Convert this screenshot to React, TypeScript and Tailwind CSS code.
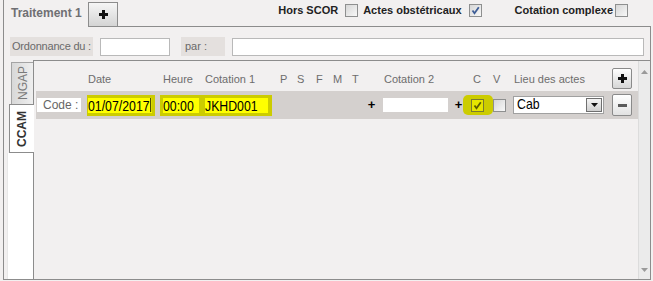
import React from 'react';

const PlusIcon: React.FC = () => (
  <svg width="9" height="9" viewBox="0 0 9 9">
    <rect x="3" y="0" width="3" height="9" fill="#111" />
    <rect x="0" y="3" width="9" height="3" fill="#111" />
  </svg>
);

const MinusIcon: React.FC = () => (
  <svg width="9" height="9" viewBox="0 0 9 9">
    <rect x="0" y="3" width="9" height="3" fill="#5a5a5a" />
  </svg>
);

const Check: React.FC<{ checked?: boolean; tone?: 'blue' | 'olive' }> = ({ checked, tone = 'blue' }) => (
  <div
    className={
      tone === 'olive'
        ? 'w-[13px] h-[13px] border border-[#7a7a30] bg-[#e6e600] flex items-center justify-center'
        : 'w-[13px] h-[13px] border border-[#8e8f8f] bg-linear-to-br from-[#d6d6d6] to-[#f8f8f8] flex items-center justify-center'
    }
  >
    {checked && (
      <svg width="11" height="11" viewBox="0 0 11 11">
        <path
          d="M2.5 5.5 L4.5 8.2 L8.8 2.2"
          fill="none"
          stroke={tone === 'olive' ? '#5c5c00' : '#3e5d96'}
          strokeWidth="1.8"
        />
      </svg>
    )}
  </div>
);

// narrow data text, like the app's condensed field font
const Narrow: React.FC<{ text: string; cursor?: boolean }> = ({ text, cursor }) => (
  <span className="inline-block whitespace-nowrap origin-left scale-x-[0.82] text-[15px] leading-[15px] text-black">
    {text}
    {cursor && <span className="inline-block align-top ml-[1px] w-[1.3px] h-[14px] bg-black" />}
  </span>
);

const Marked: React.FC<{ text: string; outer: string; inner: string; cursor?: boolean }> = ({ text, outer, inner, cursor }) => (
  <div className={`${outer} h-[21px] bg-[#cccc00] flex items-center`}>
    <div className={`${inner} h-[15px] bg-[#ffff00] flex items-center`}>
      <Narrow text={text} cursor={cursor} />
    </div>
  </div>
);

export default function App() {
  return (
    <div className="w-[653px] h-[281px] bg-[#f2f0f0] overflow-hidden font-['Liberation_Sans',Arial,sans-serif] text-[11px] text-[#333] pl-[3px] pr-[2px]">
      {/* tab strip */}
      <div className="flex h-[27px]">
        <div className="w-[85px] border-l border-[#8c8c8c] pl-[7px] pt-[6px] text-[12px] leading-[14px] font-bold text-[#6f6f73]">
          Traitement 1
        </div>
        <div className="w-[30px] mt-[2px] border border-[#8c8c8c] bg-linear-to-b from-[#f6f6f6] to-[#d4d4d4] flex items-center justify-center">
          <PlusIcon />
        </div>
        <div className="flex-1 border-b border-[#8c8c8c] flex items-start justify-end pr-[23px] pt-[4px]">
          <span className="font-bold text-[#222] leading-[13px]">Hors SCOR</span>
          <div className="ml-[7px]"><Check /></div>
          <span className="ml-[5px] font-bold text-[#222] leading-[13px]">Actes obstétricaux</span>
          <div className="ml-[7px]"><Check checked /></div>
          <span className="ml-[33px] font-bold text-[#222] leading-[13px]">Cotation complexe</span>
          <div className="ml-[2px]"><Check /></div>
        </div>
      </div>

      {/* body */}
      <div className="h-[253px] border-l border-r border-b border-[#8c8c8c] flex flex-col">
        <div className="flex items-center h-[19px] mt-[10px] pl-[6px] pr-[6px]">
          <div className="w-[83px] h-[19px] bg-[#e4e0de] flex items-center pl-[2px] whitespace-nowrap tracking-[-0.2px] text-[#6a6a6a]">Ordonnance du :</div>
          <div className="ml-[7px] w-[70px] h-[18px] bg-white border border-[#b9b9b9]" />
          <div className="ml-[11px] w-[44px] h-[19px] bg-[#e4e0de] flex items-center pl-[4px] text-[#6a6a6a]">par :</div>
          <div className="ml-[7px] flex-1 h-[18px] bg-white border border-[#b9b9b9]" />
        </div>

        <div className="mt-[4px] flex flex-1">
          {/* vertical tabs */}
          <div className="w-[29px] flex flex-col relative z-10">
            <div className="ml-[7px] mt-[2px] w-[22px] h-[42px] border-l border-t border-[#a4a4a4] bg-linear-to-r from-[#d8d8d8] to-[#efefef] flex items-center justify-center">
              <span className="[writing-mode:vertical-rl] rotate-180 text-[12px] text-[#7a7a7a]">NGAP</span>
            </div>
            <div className="ml-[5px] w-[25px] h-[49px] bg-white border-l border-t border-b border-[#8c8c8c] flex items-center justify-center">
              <span className="[writing-mode:vertical-rl] rotate-180 text-[12px] font-bold text-[#333]">CCAM</span>
            </div>
            <div className="ml-[3px] flex-1 bg-white border-l border-[#e8e8e8]" />
          </div>

          {/* content */}
          <div className="flex-1 flex border-l border-t border-[#8c8c8c]">
            <div className="flex-1 flex flex-col">
              <div className="flex h-[30px] items-start text-[#6d6d6d]">
                <span className="w-[54px]" />
                <span className="w-[75px] mt-[12px] leading-[13px]">Date</span>
                <span className="w-[42px] mt-[12px] leading-[13px]">Heure</span>
                <span className="w-[75px] mt-[12px] leading-[13px]">Cotation 1</span>
                <span className="w-[17px] mt-[12px] leading-[13px]">P</span>
                <span className="w-[19px] mt-[12px] leading-[13px]">S</span>
                <span className="w-[17px] mt-[12px] leading-[13px]">F</span>
                <span className="w-[19px] mt-[12px] leading-[13px]">M</span>
                <span className="w-[32px] mt-[12px] leading-[13px]">T</span>
                <span className="w-[89px] mt-[12px] leading-[13px]">Cotation 2</span>
                <span className="w-[20px] mt-[12px] leading-[13px]">C</span>
                <span className="w-[21px] mt-[12px] leading-[13px]">V</span>
                <span className="w-[98px] mt-[12px] leading-[13px]">Lieu des actes</span>
                <div className="mt-[7px] w-[20px] h-[21px] rounded-[2px] border border-[#8a8a8a] bg-linear-to-b from-[#ffffff] to-[#d6d6d6] flex items-center justify-center">
                  <PlusIcon />
                </div>
              </div>

              <div className="ml-[2px] h-[28px] bg-[#d4d0ce] flex items-center">
                <div className="ml-[1px] w-[44px] h-[14px] bg-white pl-[6px] text-[12px] leading-[14px] text-[#666]">Code :</div>
                <div className="ml-[6px]">
                  <Marked text="01/07/2017" outer="w-[68px] pl-[1px]" inner="w-[64px]" cursor />
                </div>
                <div className="ml-[5px]">
                  <Marked text="00:00" outer="w-[41px] pl-[3px]" inner="w-[36px]" />
                </div>
                <Marked text="JKHD001" outer="w-[71px] pl-[4px]" inner="w-[63px]" />
                <span className="ml-[95px] w-[9px] text-center text-[13px] font-bold text-black">+</span>
                <div className="ml-[7px] w-[65px] h-[14px] bg-white" />
                <span className="ml-[6px] w-[9px] text-center text-[13px] font-bold text-black">+</span>
                <div className="w-[30px] h-[20px] rounded-[5px] bg-[#cccc00] flex items-center pl-[8px]">
                  <Check checked tone="olive" />
                </div>
                <Check />
                <div className="ml-[7px] w-[91px] h-[18px] bg-white border border-[#a0a0a0] flex items-center">
                  <div className="pl-[3px] flex-1">
                    <Narrow text="Cab" />
                  </div>
                  <div className="mr-px w-[16px] h-[14px] border border-[#6f6f6f] bg-linear-to-b from-[#f4f4f4] to-[#cfcfcf] flex items-center justify-center">
                    <svg width="7" height="4" viewBox="0 0 7 4">
                      <path d="M0 0 H7 L3.5 4 Z" fill="#111" />
                    </svg>
                  </div>
                </div>
                <div className="ml-[8px] w-[20px] h-[22px] rounded-[2px] border border-[#8a8a8a] bg-linear-to-b from-[#ffffff] to-[#e2e2e2] flex items-center justify-center">
                  <MinusIcon />
                </div>
              </div>
            </div>

            {/* scrollbar */}
            <div className="w-[12px] bg-[#ebebeb] border-l border-[#dcdcdc] flex flex-col justify-between items-center pt-[9px] pb-[7px]">
              <svg width="7" height="4" viewBox="0 0 7 4">
                <path d="M0 4 H7 L3.5 0 Z" fill="#9a9a9a" />
              </svg>
              <svg width="7" height="4" viewBox="0 0 7 4">
                <path d="M0 0 H7 L3.5 4 Z" fill="#9a9a9a" />
              </svg>
            </div>
          </div>
        </div>
      </div>
    </div>
  );
}
